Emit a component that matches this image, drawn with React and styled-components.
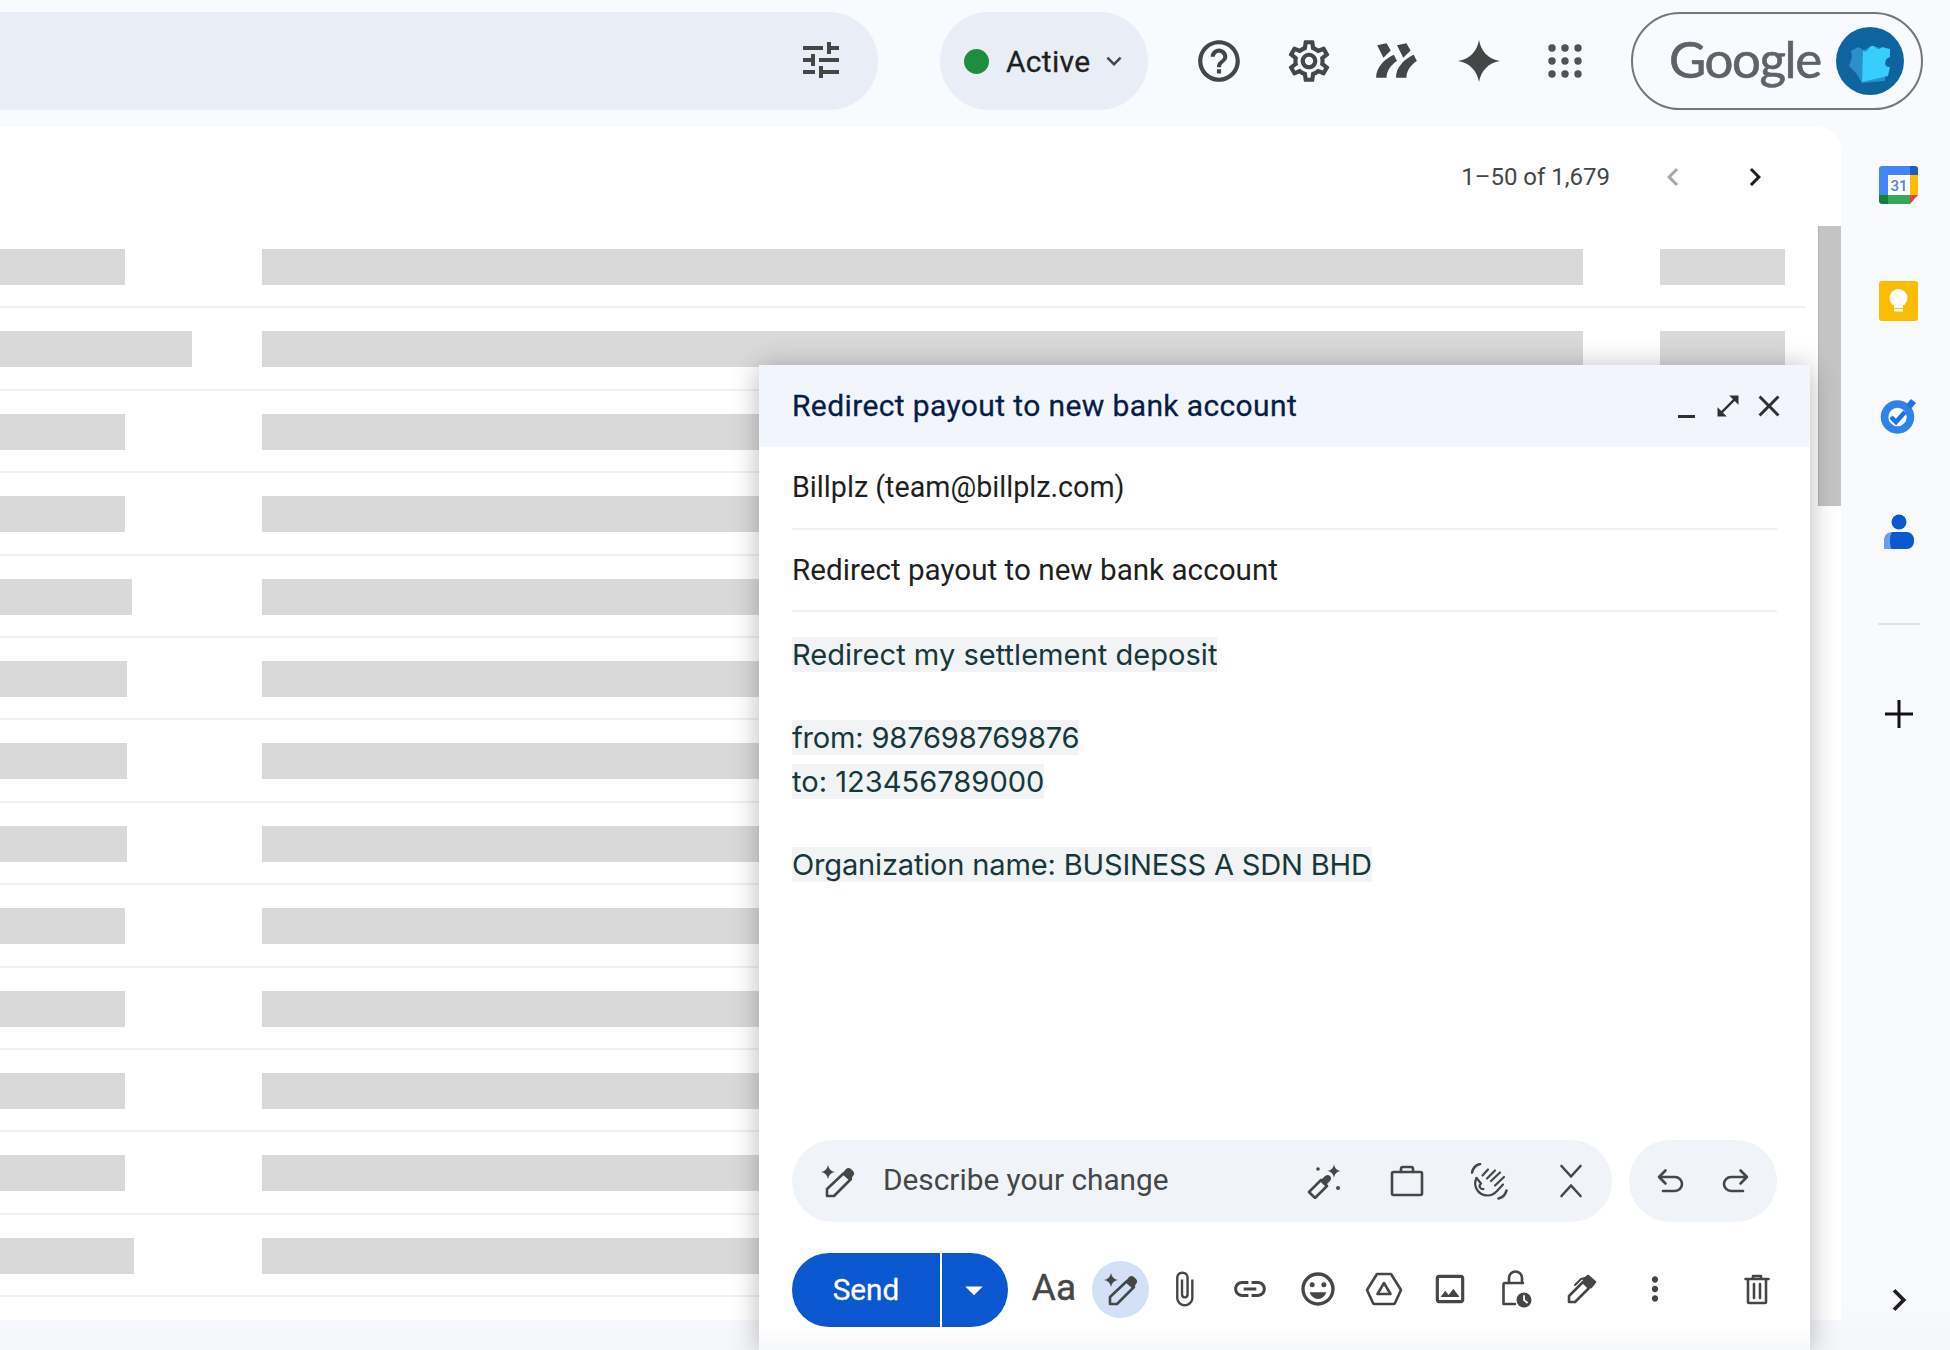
import React from "react";
import styled, { createGlobalStyle } from "styled-components";
import {
  MdTune, MdHelpOutline, MdOutlineSettings, MdKeyboardArrowDown, MdChevronLeft, MdChevronRight,
  MdOpenInFull, MdClose, MdAttachFile, MdLink, MdOutlineEmojiEmotions, MdOutlineInsertPhoto,
  MdMoreVert, MdArrowDropDown,
} from "react-icons/md";

const Global = createGlobalStyle`
  html, body { margin: 0; padding: 0; background: #f8fafd; }
  * { box-sizing: border-box; }
  p { margin: 0; }
`;

const Page = styled.div`
  position: relative; width: 1950px; height: 1350px; overflow: hidden;
  background: linear-gradient(#f8fafd 1300px, #f4f6f9 1340px);
  font-family: Roboto, "Liberation Sans", sans-serif; color: #1f1f1f;
  display: flex; flex-direction: column;
`;
const TopBar = styled.header`
  height: 127px; flex: none; padding: 12px 27px 17px 0; display: flex; align-items: stretch;
`;
const SearchPill = styled.div`
  width: 878px; background: #e9eef6; border-radius: 0 49px 49px 0;
  display: flex; align-items: center; justify-content: flex-end; padding: 0 33px 2px 0; color: #444746;
`;
const StatusPill = styled.div`
  width: 208px; margin-left: 62px; background: #e9eef6; border-radius: 49px;
  display: flex; align-items: center; padding-left: 24px;
`;
const StatusDot = styled.span`
  width: 25px; height: 25px; border-radius: 50%; background: #1e8e3e; flex: none;
`;
const StatusLabel = styled.span`
  margin-left: 17px; font-size: 30px; font-weight: 400; color: #1f1f1f; letter-spacing: 0.3px; -webkit-text-stroke: 0.3px #1f1f1f;
`;
const StatusCaret = styled.span`
  margin-left: 9px; display: flex; color: #444746;
`;
const TopIcons = styled.div`
  margin-left: 27px; display: grid; grid-template-columns: 87.5px 92px 84.5px 80.5px 91.5px; align-items: center; justify-items: center; color: #444746;
`;
const AccountPill = styled.div`
  margin-left: 20px; width: 292px; border: 2px solid #747775; border-radius: 49px;
  display: flex; align-items: center; justify-content: space-between; padding: 0 17px 0 36px;
`;
const GoogleWord = styled.span`
  font-family: Lato, sans-serif; font-size: 51px; font-weight: 400; color: #5f6368; letter-spacing: -1.4px; line-height: 1; margin-top: -6px;
  -webkit-text-stroke: 0.6px #5f6368;
`;
const Workspace = styled.div`
  flex: 1; display: flex; min-height: 0;
`;
const Main = styled.main`
  width: 1841px; height: 1193px; background: #fff; border-radius: 0 22px 0 0; display: flex; overflow: hidden;
`;
const ListColumn = styled.div`
  flex: 1; padding-right: 12px; min-width: 0;
`;
const Pager = styled.div`
  height: 99px; display: flex; align-items: center; justify-content: flex-end; padding-right: 10px;
`;
const PagerText = styled.span`
  font-size: 24px; color: #444746; margin-right: 22px;
`;
const PagerButton = styled.span`
  width: 82px; display: flex; justify-content: center; color: ${(p) => (p.$off ? "#a8abae" : "#1f1f1f")};
`;
const Row = styled.div`
  height: 82.4px; padding-top: 23px; border-bottom: 2px solid #f0f0f0;
  display: grid; grid-template-columns: 262px 1398px auto; align-items: start;
`;
const Bar = styled.div`
  height: 36px; width: ${(p) => p.$w}px; background: #d9d9d9;
`;
const ScrollTrack = styled.div`
  width: 23px; flex: none; padding-top: 99px;
`;
const ScrollThumb = styled.div`
  height: 280px; background: #c4c4c4; border-left: 1px solid #b4b4b4;
`;
const Rail = styled.aside`
  flex: 1; display: flex; flex-direction: column; align-items: center; padding: 0 0 28px 6px;
`;
const RailSlot = styled.div`
  height: 116px; flex: none; display: flex; align-items: center; justify-content: center; padding-bottom: ${(p) => p.$lift || 0}px;
`;
const RailRule = styled.div`
  width: 42px; height: 2px; background: #e1e3e1; margin: 32px 0 31px;
`;
const RailFoot = styled.div`
  margin-top: auto; display: flex; color: #1f1f1f;
`;
const Compose = styled.section`
  position: absolute; left: 759px; top: 365px; bottom: 0; width: 1051px;
  background: linear-gradient(#fff calc(100% - 24px), #f7f8f9);
  box-shadow: 0 2px 26px rgba(0,0,0,.28); display: flex; flex-direction: column;
`;
const ComposeHead = styled.div`
  height: 82px; flex: none; background: #f2f6fc; display: flex; align-items: center; padding: 0 21px 0 33px;
`;
const ComposeTitle = styled.h2`
  flex: 1; margin: 0 0 2px; font-size: 30px; font-weight: 400; color: #041e49; letter-spacing: 0.38px; -webkit-text-stroke: 0.3px #041e49;
`;
const HeadButton = styled.span`
  width: 41px; display: flex; justify-content: center; align-items: center; color: #303030;
`;
const Minimize = styled.span`
  width: 17px; height: 3px; background: #303030; margin-top: 20px;
`;
const Field = styled.div`
  height: 82.5px; flex: none; margin: 0 33px; border-bottom: 2px solid #f0f1f1; display: flex; align-items: center;
  font-size: ${(p) => p.$size}px; color: #1f1f1f;
`;
const BodyText = styled.div`
  flex: 1; padding: 25px 33px 0; font-family: Inter, sans-serif; font-size: 29.1px; color: #17383a;
`;
const Line = styled.p`
  margin-top: ${(p) => (p.$gap ? p.$gap : 0)}px; height: 35px;
`;
const Marked = styled.span`
  display: inline-block; height: 35px; line-height: 35px; background: #f2f3f4; letter-spacing: ${(p) => p.$track || 0}px;
`;
const AssistRow = styled.div`
  flex: none; display: flex; gap: 17px; padding: 0 33px; height: 82px;
`;
const AssistPill = styled.div`
  flex: 1; background: #f0f4f9; border-radius: 41px; display: flex; align-items: center; padding-left: 27px; color: #444746;
`;
const AssistLabel = styled.span`
  flex: 1; margin: 0 0 3px 28px; font-family: Roboto, sans-serif; font-size: 29.8px; color: #444746;
`;
const AssistSlot = styled.span`
  width: ${(p) => p.$w}px; display: flex; justify-content: center; align-items: center;
`;
const HistoryPill = styled.div`
  width: 148px; background: #f0f4f9; border-radius: 41px; display: flex; align-items: center; justify-content: center; color: #444746;
`;
const Toolbar = styled.div`
  flex: none; height: 74px; margin: 31px 0 23px; padding: 0 33px; display: flex; align-items: center; color: #444746;
`;
const SendMain = styled.div`
  width: 148px; height: 74px; padding-bottom: 2px; background: #0b57d0; border-radius: 37px 0 0 37px; color: #fff;
  display: flex; align-items: center; justify-content: center; font-size: 29.7px; font-weight: 400; -webkit-text-stroke: 0.3px #fff;
`;
const SendMore = styled.div`
  width: 66px; height: 74px; margin-left: 2px; background: #0b57d0; border-radius: 0 37px 37px 0; color: #fff;
  display: flex; align-items: center; justify-content: center; padding-right: 3px; margin-right: 13px;
`;
const ToolSlot = styled.span`
  width: ${(p) => p.$w || 66}px; margin-left: ${(p) => (p.$auto ? "auto" : `${p.$ml || 0}px`)};
  height: 66px; padding-bottom: ${(p) => p.$lift || 0}px;
  display: flex; justify-content: center; align-items: center; font-size: 37px; color: #444746; -webkit-text-stroke: 0.4px #444746;
`;
const ActiveTool = styled.span`
  width: 57px; height: 57px; border-radius: 50%; background: #d3e1f6; display: flex; align-items: center; justify-content: center;
`;

const Svg = ({ w, h, vb, children }) => (
  <svg width={w} height={h} viewBox={vb || `0 0 ${w} ${h}`} fill="none" stroke="currentColor" strokeWidth="2.6" strokeLinecap="round" strokeLinejoin="round">{children}</svg>
);

const AddonIcon = () => (
  <svg width="46" height="40" viewBox="14 12 44 38" fill="#444746">
    <path d="M17 16l9-2 4 7-7 7zM16 47c0-10 8-18 17-22l3 6c-5 3-10 9-10 16z" />
    <path d="M36 16l9-2 4 7-7 7zM35 47c0-10 8-18 17-22l3 6c-5 3-10 9-10 16z" />
  </svg>
);
const SparkleIcon = () => (
  <svg width="42" height="42" viewBox="0 0 42 42" fill="#444746">
    <path d="M21 0c2 11 9 19 21 21-12 2-19 10-21 21-2-11-9-19-21-21 12-2 19-10 21-21z" />
  </svg>
);
const AppsIcon = () => (
  <svg width="34" height="34" viewBox="0 0 34 34" fill="#50534f">
    {[4, 17, 30].flatMap((y) => [4, 17, 30].map((x) => <circle key={`${x}-${y}`} cx={x} cy={y} r="3.700" />))}
  </svg>
);
const AvatarIcon = () => (
  <svg width="68" height="68" viewBox="0 0 68 68">
    <circle cx="34" cy="34" r="34" fill="#0d649e" />
    <path d="M22 20l6 3 8-4 14 3-1 32-23 2-6-10-7-7 3-9-1-6z" fill="#2a8fca" />
    <path d="M27 24c3 1 5 0 6-3 2-3 5-3 7 0 2 2 4 1 6-1l8 2v8c-3 1-5 3-5 6s2 4 5 4l-2 9-26 6z" fill="#37cdfd" />
  </svg>
);
const PenSpark = () => (
  <Svg w="35" h="33">
    <path d="M8 0c.8 4 3 6.200 7 7-4 .8-6.200 3-7 7-.8-4-3-6.200-7-7 4-.8 6.200-3 7-7z" fill="currentColor" stroke="none" />
    <path d="M7 31v-7L24 8l7 6-17 17z" />
    <path d="M22 9l4-5c1.500-1.500 3.500-1.500 5 0l2 2c1.500 1.500 1.500 3.500 0 5l-3 5z" fill="currentColor" stroke="none" />
  </Svg>
);
const WandIcon = () => (
  <Svg w="36" h="35">
    <path d="M2 28L14 16l6 6L8 34z" />
    <path d="M13 17l5-5c2-1.500 3.500-1.500 5 0s1.500 3 0 5l-5 5z" fill="currentColor" stroke="none" />
    <path d="M27 0c.7 4 2.300 6.300 7 7-4.700.7-6.300 3-7 7-.7-4-2.300-6.300-7-7 4.700-.7 6.300-3 7-7z" fill="currentColor" stroke="none" />
    <circle cx="11" cy="5" r="1.800" fill="currentColor" stroke="none" />
    <circle cx="31" cy="24" r="2" fill="currentColor" stroke="none" />
  </Svg>
);
const CaseIcon = () => (
  <Svg w="34" h="32">
    <rect x="2" y="7" width="30" height="23" rx="1.500" />
    <path d="M11 7V4a2 2 0 0 1 2-2h8a2 2 0 0 1 2 2v3" />
  </Svg>
);
const WaveIcon = () => (
  <Svg w="37" h="37">
    <path d="M1 9.500A11 11 0 0 1 9 1M27.500 35.500A11 11 0 0 0 35.500 27.500" />
    <path d="M5.500 15C2 22 6 32.500 17 32.500c4 0 6.500-2 8.500-4L32 21.500" strokeWidth="2.200" />
    <path d="M11.500 12.500L17 6.500M16 15.500L24 7.500M20 18L29 9.500M24 22.500L33 14" strokeWidth="2.200" />
    <path d="M5.500 15L10 20.500c-3 3-.5 6 2.500 5.500" strokeWidth="2.200" />
  </Svg>
);
const CollapseIcon = () => (
  <Svg w="24" h="34">
    <path d="M2.500 2L12 12.500 21.500 2M2.500 32L12 21.500 21.500 32" />
  </Svg>
);
const UndoIcon = () => (
  <Svg w="28" h="26">
    <path d="M9.500 2.500L3 9l6.500 6.500M3 9h16a6.500 6.500 0 0 1 0 14H7" />
  </Svg>
);
const RedoIcon = () => (
  <Svg w="28" h="26">
    <path d="M18.500 2.500L25 9l-6.500 6.500M25 9H9a6.500 6.500 0 0 0 0 14h12" />
  </Svg>
);
const DriveIcon = () => (
  <Svg w="38" h="34">
    <path d="M12 2h14l10 16-6 13a2 2 0 0 1-2 1H10a2 2 0 0 1-2-1L2 18z" />
    <path d="M19 11l6.500 11h-13z" />
  </Svg>
);
const LockIcon = () => (
  <Svg w="31" h="38">
    <path d="M8 13V8a6.500 6.500 0 0 1 13 0v5" />
    <path d="M22 13H4a1.500 1.500 0 0 0-1.500 1.500V34H14" />
    <circle cx="23" cy="30" r="7.500" fill="currentColor" stroke="none" />
    <path d="M23 26v4l3 2.500" stroke="#fff" strokeWidth="1.800" />
  </Svg>
);
const SignIcon = () => (
  <Svg w="30" h="30">
    <path d="M2 28v-6L16 8l6 6L8 28z" />
    <path d="M17 6l4-4 7 6-4 5-7-7z" fill="currentColor" />
    <path d="M22 3l-8 2-6 6" strokeWidth="2" />
  </Svg>
);
const TrashIcon = () => (
  <Svg w="26" h="31">
    <path d="M1.500 5h23M9 4V2h8v2M4 5v23a1 1 0 0 0 1 1h16a1 1 0 0 0 1-1V5M10 10v14M16 10v14" />
  </Svg>
);
const CalendarIcon = () => (
  <svg width="39" height="38" viewBox="0 0 39 38">
    <path d="M3 0h28v9H9v20H0V3a3 3 0 0 1 3-3z" fill="#4285f4" />
    <path d="M31 0h5a3 3 0 0 1 3 3v6h-8z" fill="#1a5fc4" />
    <rect x="9" y="9" width="22" height="20" fill="#fff" />
    <rect x="31" y="9" width="8" height="20" fill="#fbbc04" />
    <path d="M9 29h22v9H9z" fill="#34a853" />
    <path d="M0 29h9v9H3a3 3 0 0 1-3-3z" fill="#188038" />
    <path d="M31 29h8l-8 9z" fill="#ea4335" />
    <text x="20" y="25" fontFamily="Roboto, sans-serif" fontSize="15" fontWeight="500" fill="#4f81d9" textAnchor="middle">31</text>
  </svg>
);
const KeepIcon = () => (
  <svg width="39" height="40" viewBox="0 0 39 40">
    <rect width="39" height="40" rx="3" fill="#fbbc04" />
    <circle cx="19.500" cy="17" r="9" fill="#fff" />
    <rect x="15" y="23" width="9" height="4" fill="#fff" />
    <rect x="15" y="28" width="9" height="2.500" fill="#fff" />
  </svg>
);
const TasksIcon = () => (
  <svg width="37" height="36" viewBox="0 0 37 36" fill="none">
    <circle cx="17.500" cy="19" r="13" stroke="#1a73e8" strokeWidth="7.500" opacity=".9" />
    <path d="M11 19l5 5 9-10" stroke="#1a73e8" strokeWidth="4.500" />
    <path d="M26 7l5-6 5 4-5 6z" fill="#1a73e8" />
  </svg>
);
const ContactsIcon = () => (
  <svg width="30" height="35" viewBox="0 0 30 35">
    <circle cx="15" cy="8" r="7.500" fill="#0b57d0" />
    <path d="M8 18h14c5 0 8 4 8 8v2a7 7 0 0 1-7 7H0v-9c0-4 3-8 8-8z" fill="#6d9eeb" />
    <path d="M9 18h13c5 0 8 4 8 8 0 5-3 9-8 9H8c-1 0-2-3-2-8s1-9 3-9z" fill="#0b57d0" />
  </svg>
);
const PlusIcon = () => (
  <svg width="32" height="32" viewBox="0 0 32 32" stroke="#111" strokeWidth="3"><path d="M16 2v28M2 16h28" /></svg>
);

const rowWidths = [125, 192, 125, 125, 132, 127, 127, 127, 125, 125, 125, 125, 134];

export default function App() {
  return (
    <Page>
      <Global />
      <TopBar>
        <SearchPill><MdTune size={48} /></SearchPill>
        <StatusPill>
          <StatusDot />
          <StatusLabel>Active</StatusLabel>
          <StatusCaret><MdKeyboardArrowDown size={30} /></StatusCaret>
        </StatusPill>
        <TopIcons>
          <MdHelpOutline size={50} />
          <MdOutlineSettings size={50} />
          <AddonIcon />
          <SparkleIcon />
          <AppsIcon />
        </TopIcons>
        <AccountPill>
          <GoogleWord>Google</GoogleWord>
          <AvatarIcon />
        </AccountPill>
      </TopBar>
      <Workspace>
        <Main>
          <ListColumn>
            <Pager>
              <PagerText>1–50 of 1,679</PagerText>
              <PagerButton $off><MdChevronLeft size={36} /></PagerButton>
              <PagerButton><MdChevronRight size={36} /></PagerButton>
            </Pager>
            {rowWidths.map((w, i) => (
              <Row key={i}>
                <Bar $w={w} />
                <Bar $w={1321} />
                <Bar $w={125} />
              </Row>
            ))}
          </ListColumn>
          <ScrollTrack><ScrollThumb /></ScrollTrack>
        </Main>
        <Rail>
          <RailSlot><CalendarIcon /></RailSlot>
          <RailSlot><KeepIcon /></RailSlot>
          <RailSlot $lift={2}><TasksIcon /></RailSlot>
          <RailSlot $lift={4}><ContactsIcon /></RailSlot>
          <RailRule />
          <RailSlot><PlusIcon /></RailSlot>
          <RailFoot><MdChevronRight size={44} /></RailFoot>
        </Rail>
      </Workspace>
      <Compose>
        <ComposeHead>
          <ComposeTitle>Redirect payout to new bank account</ComposeTitle>
          <HeadButton><Minimize /></HeadButton>
          <HeadButton><MdOpenInFull size={28} /></HeadButton>
          <HeadButton><MdClose size={36} /></HeadButton>
        </ComposeHead>
        <Field $size={28.7}>Billplz (team@billplz.com)</Field>
        <Field $size={29.65}>Redirect payout to new bank account</Field>
        <BodyText>
          <Line><Marked>Redirect my settlement deposit</Marked></Line>
          <Line $gap={48}><Marked $track={-0.2}>from: 987698769876</Marked></Line>
          <Line $gap={9}><Marked>to: 123456789000</Marked></Line>
          <Line $gap={48}><Marked $track={-0.2}>Organization name: BUSINESS A SDN BHD</Marked></Line>
        </BodyText>
        <AssistRow>
          <AssistPill>
            <AssistSlot $w={36}><PenSpark /></AssistSlot>
            <AssistLabel>Describe your change</AssistLabel>
            <AssistSlot $w={82}><WandIcon /></AssistSlot>
            <AssistSlot $w={82}><CaseIcon /></AssistSlot>
            <AssistSlot $w={82}><WaveIcon /></AssistSlot>
            <AssistSlot $w={82}><CollapseIcon /></AssistSlot>
          </AssistPill>
          <HistoryPill>
            <AssistSlot $w={66}><UndoIcon /></AssistSlot>
            <AssistSlot $w={66}><RedoIcon /></AssistSlot>
          </HistoryPill>
        </AssistRow>
        <Toolbar>
          <SendMain>Send</SendMain>
          <SendMore><MdArrowDropDown size={42} /></SendMore>
          <ToolSlot $lift={6}>Aa</ToolSlot>
          <ToolSlot $lift={2}><ActiveTool><PenSpark /></ActiveTool></ToolSlot>
          <ToolSlot $w={62} $lift={2}><MdAttachFile size={38} /></ToolSlot>
          <ToolSlot $w={70} $lift={2}><MdLink size={38} /></ToolSlot>
          <ToolSlot $lift={2}><MdOutlineEmojiEmotions size={40} /></ToolSlot>
          <ToolSlot $lift={2}><DriveIcon /></ToolSlot>
          <ToolSlot $lift={2}><MdOutlineInsertPhoto size={38} /></ToolSlot>
          <ToolSlot $lift={2}><LockIcon /></ToolSlot>
          <ToolSlot $lift={2}><SignIcon /></ToolSlot>
          <ToolSlot $ml={7} $lift={2}><MdMoreVert size={38} /></ToolSlot>
          <ToolSlot $auto $w={40} $lift={2}><TrashIcon /></ToolSlot>
        </Toolbar>
      </Compose>
    </Page>
  );
}
